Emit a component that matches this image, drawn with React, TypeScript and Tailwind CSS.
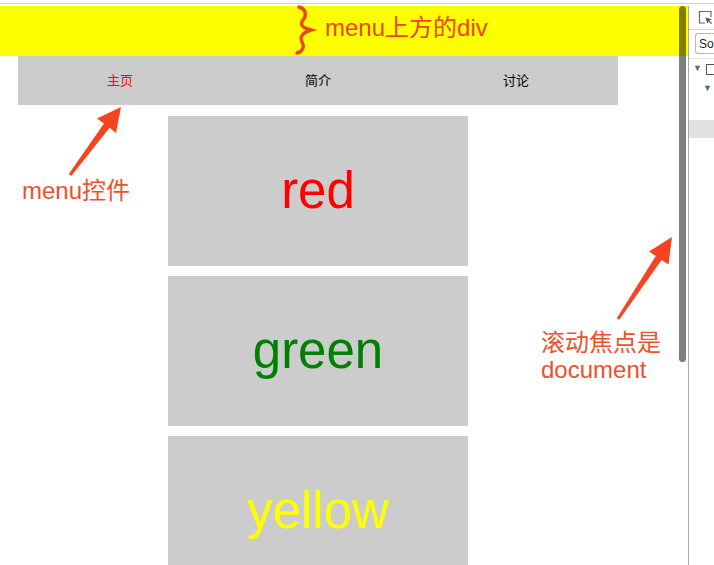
import React from 'react';

const BOXES = [
  { label: 'red', color: 'text-[#ff0000]' },
  { label: 'green', color: 'text-[#008000]' },
  { label: 'yellow', color: 'text-[#ffff00]' },
];

const MENU = ['主页', '简介', '讨论'];

function InspectIcon() {
  return (
    <svg width="15" height="15" viewBox="0 0 15 15" fill="none">
      <path d="M7 13H1.5V1.5H13V7" stroke="#6b6b6b" strokeWidth="1.2" />
      <path d="M7.5 7.5L9.3 14L10.4 11.2L13.3 14.1L14.1 13.3L11.2 10.4L14 9.3Z" fill="#555" />
    </svg>
  );
}

function Annotations() {
  return (
    <svg
      className="pointer-events-none absolute left-0 top-0"
      width="714"
      height="565"
      viewBox="0 0 714 565"
    >
      <path
        d="M299 7 C306 9, 307 15, 303 20 C299 25, 303 28, 311 30 C304 32, 299 36, 302 42 C305 47, 302 52, 297 53"
        stroke="#ee4422"
        strokeWidth="3.4"
        strokeLinecap="round"
        fill="none"
      />
      <polygon
        points="68.8,174.1 104,123.5 97,118.5 121,107 116,133 109.6,127.7 71.2,175.9"
        fill="#f5441f"
        strokeLinejoin="round"
      />
      <polygon
        points="616.8,318.2 655.8,256.1 649,251.5 672,237 668.5,264.5 661.6,259.9 619.2,319.8"
        fill="#f5441f"
      />
    </svg>
  );
}

export default function App() {
  return (
    <div className="relative flex h-[565px] w-[714px] flex-col overflow-hidden bg-white font-['Liberation_Sans','Noto_Sans_CJK_SC',sans-serif]">
      <div className="h-[3px] shrink-0" />
      <div className="h-px shrink-0 bg-[#d2d2d2]" />
      <div className="h-[2px] shrink-0" />

      <div className="flex min-h-0 flex-1">
        <main className="w-[688px] shrink-0 overflow-hidden">
          <div className="h-[50px] bg-[#ffff00]" />
          <nav className="ml-[18px] grid h-[49px] w-[600px] grid-cols-[198px_198px_198px] bg-[#cccccc] pl-[3px] text-[13px] leading-[49px]">
            {MENU.map((item, i) => (
              <span
                key={item}
                className={`text-center ${i === 0 ? 'text-[#ff0000]' : 'text-black'}`}
              >
                {item}
              </span>
            ))}
          </nav>
          <div className="ml-[18px] flex w-[600px] flex-col items-center gap-[10px] pt-[11px]">
            {BOXES.map((box) => (
              <div
                key={box.label}
                className={`h-[150px] w-[300px] shrink-0 bg-[#cccccc] text-center text-[51px] leading-[150px] ${box.color}`}
              >
                {box.label}
              </div>
            ))}
          </div>
        </main>

        <aside className="flex-1 border-l border-[#a8a8a8] bg-white">
          <div className="flex h-[23px] items-center pl-[9px]">
            <InspectIcon />
          </div>
          <div className="h-px bg-[#d6d6d6]" />
          <div className="ml-[6px] mt-[3px] flex h-[21px] items-center rounded-l-[3px] border border-r-0 border-[#b9b9b9] pl-[3px] text-[12px] text-[#222]">
            So
          </div>
          <div className="mt-[4px] h-px bg-[#e2e2e2]" />
          <div className="flex h-[20px] items-center gap-[4px] pl-[4px] text-[9px] text-[#666]">
            <span>▼</span>
            <span className="h-[11px] w-[10px] border-[1.5px] border-[#555]" />
          </div>
          <div className="flex h-[20px] items-center pl-[14px] text-[9px] text-[#666]">
            <span>▼</span>
          </div>
          <div className="mt-[21px] h-[18px] bg-[#e2e2e2]" />
        </aside>
      </div>

      <div className="pointer-events-none absolute left-[679px] top-[6px] h-[356px] w-[7px] rounded-full bg-black/50" />

      <Annotations />

      <span className="absolute left-[325px] top-[15px] text-[24px] leading-[26px] text-[#ee4422]">
        menu上方的div
      </span>
      <span className="absolute left-[22px] top-[177px] text-[24px] leading-[28px] text-[#f0502c]">
        menu控件
      </span>
      <div className="absolute left-[541px] top-[329px] text-[24px] leading-[27px] text-[#f0502c]">
        <div>滚动焦点是</div>
        <div>document</div>
      </div>
    </div>
  );
}
